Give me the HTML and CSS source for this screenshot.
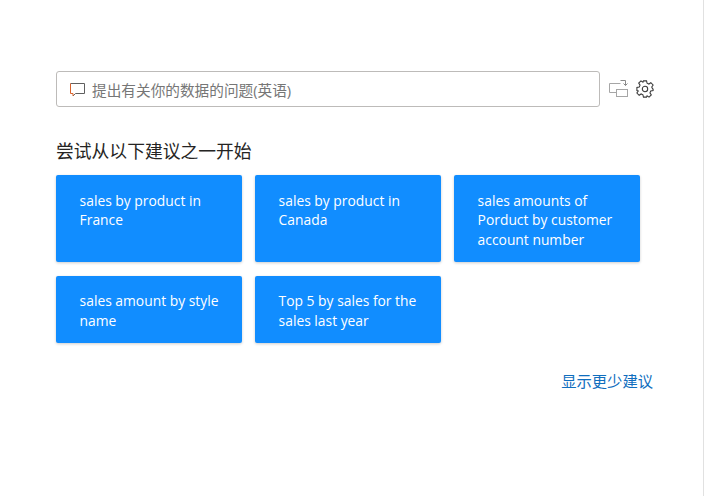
FILE: index.html
```html
<!DOCTYPE html>
<html lang="zh-CN">
<head>
    <meta charset="UTF-8">
    <meta name="viewport" content="width=device-width, initial-scale=1.0">
    <title>问答</title>
    <link rel="stylesheet" href="styles.css">
</head>
<body>

    <div class="page">
        <div class="askRow">
            <div class="askBox">
                <svg class="askIcon" width="16" height="16" viewBox="0 0 16 16" fill="none">
                    <path d="M4 15L6.5 12.5H15.5V2.5H1.5" stroke="#5f5f5f"/>
                    <path d="M1.5 2.5V12.5H4V15" stroke="#d9622b"/>
                </svg>
                <span class="askText">提出有关你的数据的问题(英语)</span>
            </div>
            <svg class="swapIcon" width="20" height="20" viewBox="0 0 20 20" fill="none" stroke="#a6a6a6">
                <path d="M7.5 13.5H0.5V4.5H11.5"/>
                <rect x="7.5" y="10.5" width="11" height="7"/>
                <path d="M11.5 1.5H16.5V6.5M14.5 4.5L16.5 6.5L18.5 4.5" stroke="#8a8a8a"/>
            </svg>
            <svg class="gearIcon" width="18" height="18" viewBox="0 0 20 20" fill="none" stroke="#3b3b3b" stroke-width="1.2">
                <circle cx="10" cy="10" r="3"/>
                <path d="M8.3 1H11.7L12.3 3.6L14.3 4.5L16.5 3L19 5.5L17.5 7.7L18.4 9.7L19 10V11.7L16.4 12.3L15.5 14.3L17 16.5L14.5 19L12.3 17.5L11.7 19H8.3L7.7 16.4L5.7 15.5L3.5 17L1 14.5L2.5 12.3L1 11.7V8.3L3.6 7.7L4.5 5.7L3 3.5L5.5 1L7.7 2.5Z"/>
            </svg>
        </div>

        <h2 class="title">尝试从以下建议之一开始</h2>

        <div class="suggestions">
            <a class="card" href="#">sales by product in France</a>
            <a class="card" href="#">sales by product in Canada</a>
            <a class="card" href="#">sales amounts of Porduct by customer account number</a>
            <a class="card" href="#">sales amount by style name</a>
            <a class="card" href="#">Top 5 by sales for the sales last year</a>
        </div>

        <div class="moreRow">
            <a class="moreLink" href="#">显示更少建议</a>
        </div>
    </div>

</body>
</html>
```

FILE: styles.css
```css
html, body {
    height: 100%;
}

body {
    margin: 0;
    font-family: "Open Sans", "Noto Sans CJK SC", sans-serif;
    background-color: #fff;
    color: #252423;
    overflow: hidden;
}

.page {
    box-sizing: border-box;
    width: 704px;
    height: 496px;
    padding: 71px 50px 0 56px;
    border-right: 1px solid #e1e1e1;
}

/* Barra de pergunta */
.askRow {
    display: flex;
    align-items: center;
}

.askBox {
    box-sizing: border-box;
    flex: none;
    width: 544px;
    height: 36px;
    margin-right: 9px;
    padding-left: 12px;
    display: flex;
    align-items: center;
    border: 1px solid #bdbbb9;
    border-radius: 3px;
}

.askIcon {
    margin-right: 7px;
}

.askText {
    font-size: 14.67px;
    color: #767676;
}

.swapIcon {
    flex: none;
    margin-right: 7px;
}

.gearIcon {
    flex: none;
}

.title {
    margin: 33px 0 13px;
    font-size: 17.8px;
    font-weight: 400;
    line-height: 22px;
}

/* Cartoes de sugestao */
.suggestions {
    display: grid;
    grid-template-columns: repeat(3, 186px);
    grid-template-rows: 87px 67px;
    gap: 13.6px 13px;
}

.card {
    box-sizing: border-box;
    padding: 15.5px 16px 0 23.6px;
    background-color: #118dff;
    border-radius: 2px;
    box-shadow: 0 1px 3px rgba(0, 0, 0, 0.2);
    color: #fff;
    font-size: 13.85px;
    line-height: 19.5px;
    text-decoration: none;
}

.moreRow {
    margin-top: 27.4px;
    display: flex;
    justify-content: flex-end;
}

.moreLink {
    font-size: 15.3px;
    line-height: 22px;
    color: #106ebe;
    text-decoration: none;
}
```
